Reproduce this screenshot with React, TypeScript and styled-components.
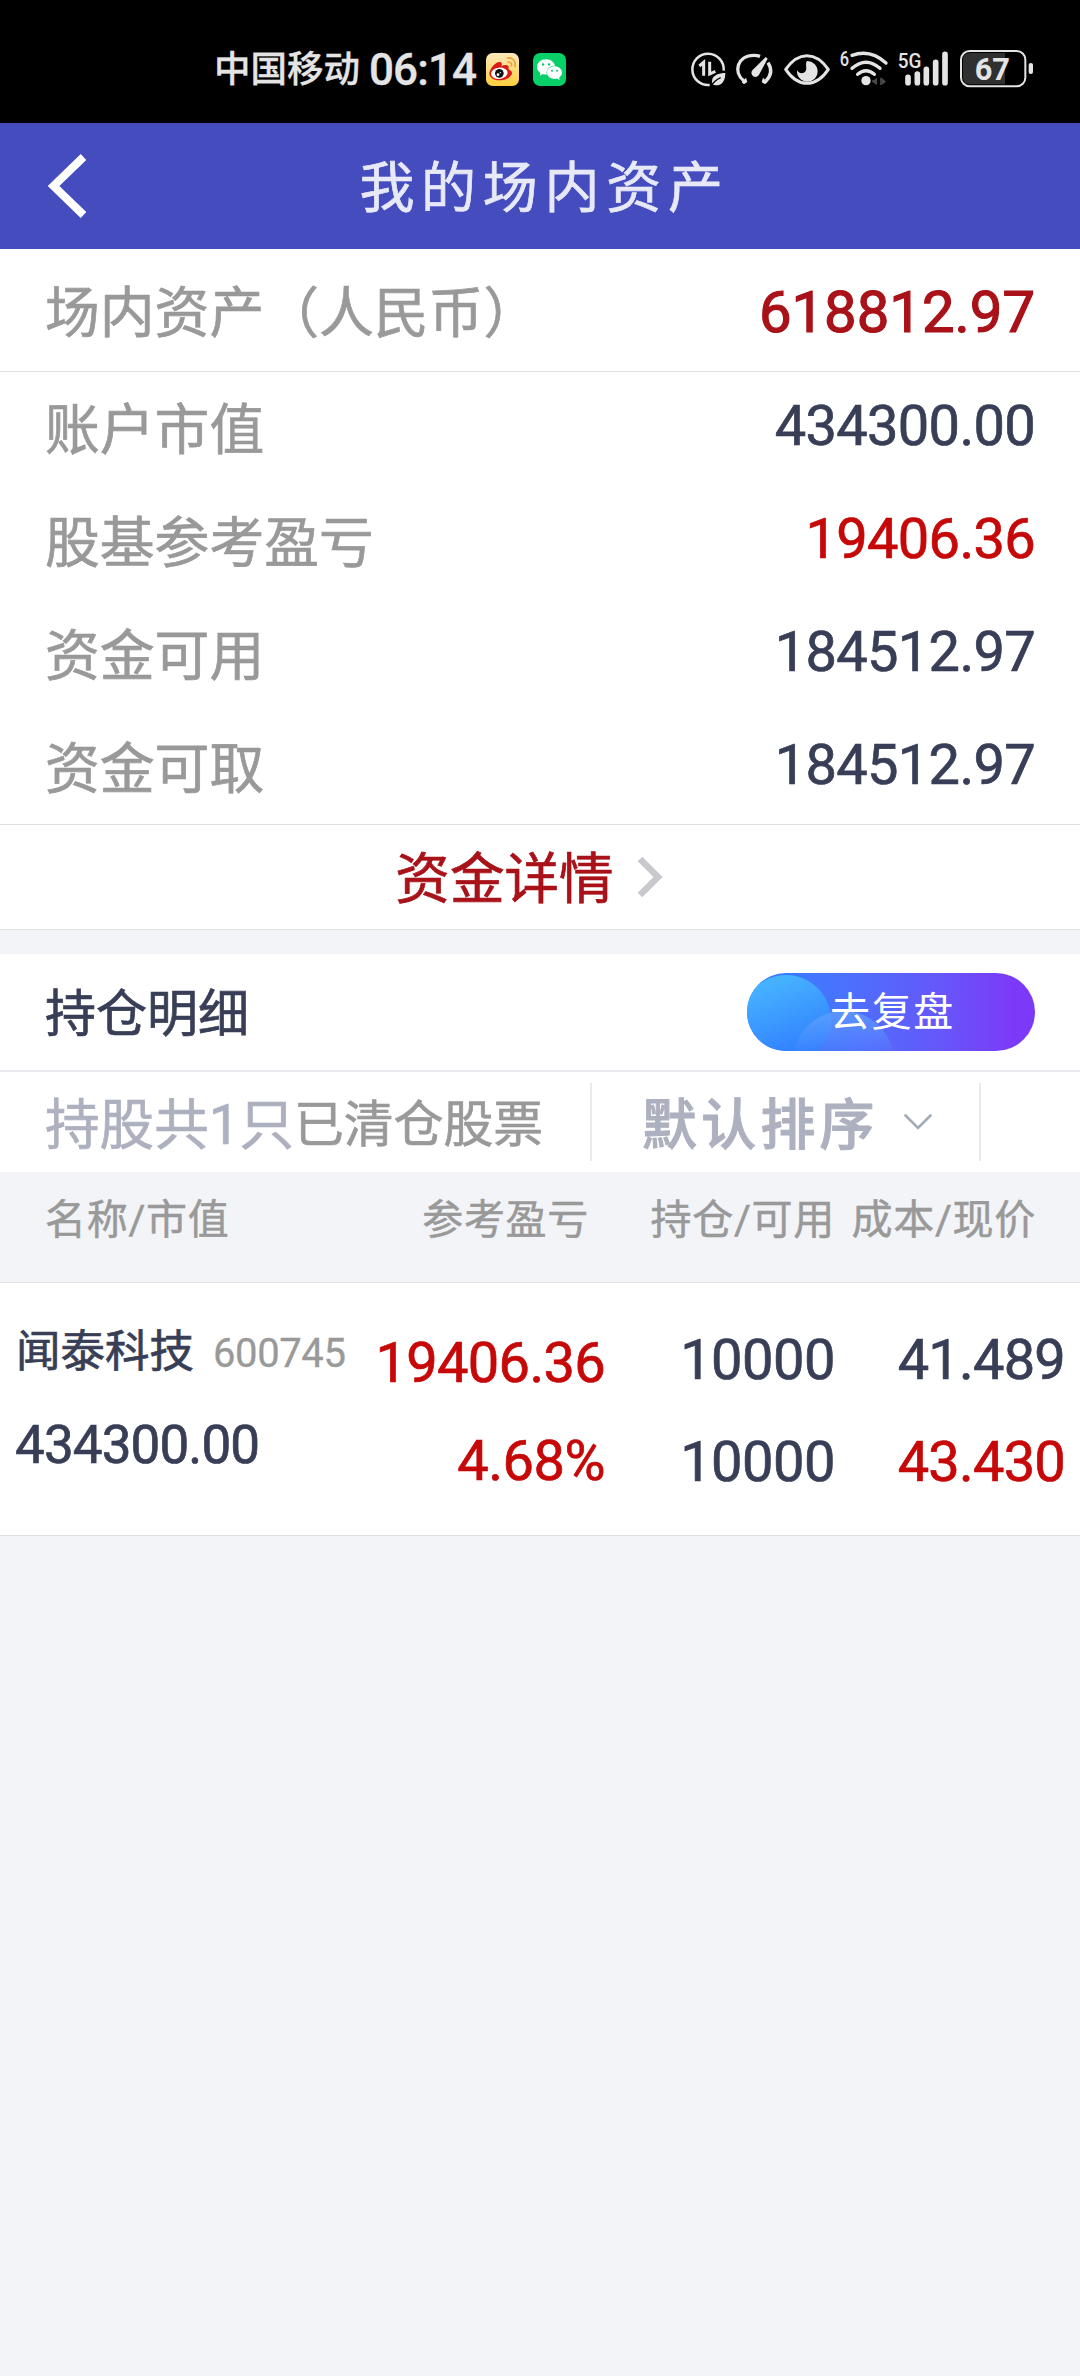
import React from "react";
import styled, { createGlobalStyle, css } from "styled-components";
import { SiWechat } from "react-icons/si";

const C = {
  ink: "#383e56",
  gray: "#999999",
  muted: "#adb0be",
  red: "#c60808",
  deepRed: "#a81218",
  page: "#f3f4f7",
  line: "#e0e0e0",
  softLine: "#e8eaf0",
  brand: "#444cbe",
  status: "#e4e4e4",
};

const GlobalStyle = createGlobalStyle`
  * { box-sizing: border-box; }
  body {
    margin: 0;
    background: ${C.page};
    font-family: Roboto, "Noto Sans CJK SC", sans-serif;
  }
`;

const Screen = styled.div`
  width: 1080px;
  min-height: 2376px;
  background: ${C.page};
  display: flex;
  flex-direction: column;
`;

interface TextProps {
  $size: number;
  $color?: string;
  $track?: number;
  $weight?: number;
  $drop?: number;
  $line?: number;
  $stroke?: number;
}

const Text = styled.span<TextProps>`
  display: block;
  white-space: nowrap;
  font-size: ${(p) => p.$size}px;
  line-height: ${(p) => p.$line ?? 60}px;
  color: ${(p) => p.$color ?? C.ink};
  letter-spacing: ${(p) => p.$track ?? 0}px;
  font-weight: ${(p) => p.$weight ?? 400};
  -webkit-text-stroke: ${(p) => p.$stroke ?? 0.7}px currentColor;
  ${(p) =>
    p.$drop !== undefined &&
    css`
      margin-top: ${p.$drop * 2}px;
    `}
`;

const StatusBar = styled.header`
  height: 123px;
  padding: 15px 43px 0 214px;
  background: #000;
  display: flex;
  align-items: center;
`;

const AppBadges = styled.div`
  display: flex;
  gap: 14px;
  margin-left: 9px;
`;

const StatusIcons = styled.div`
  display: flex;
  margin-left: auto;

  svg {
    overflow: visible;
  }
`;

const Clock = styled.div`
  margin-left: 9px;
  width: 108px;
`;

const NavBar = styled.nav`
  height: 126px;
  background: ${C.brand};
  display: grid;
  grid-template-columns: 147px 1fr 138px;
  align-items: center;
  justify-items: center;
`;

const BackButton = styled.button`
  justify-self: start;
  margin-left: 46px;
  padding: 0;
  border: 0;
  background: none;
  display: flex;
`;

const Row = styled.div<{ $height: number; $border?: boolean }>`
  height: ${(p) => p.$height}px;
  padding: 0 45px;
  background: #fff;
  display: flex;
  align-items: center;
  justify-content: space-between;
  border-bottom: ${(p) => (p.$border ? `1px solid ${C.line}` : "0")};
`;

const Summary = styled.section`
  background: #fff;
  border-bottom: 1px solid ${C.line};
`;

const DetailLink = styled.a`
  height: 105px;
  padding-right: 22px;
  background: #fff;
  border-bottom: 1px solid ${C.line};
  display: flex;
  align-items: center;
  justify-content: center;
  gap: 23px;
`;

const SectionHead = styled(Row)`
  margin-top: 24px;
  height: 118px;
  border-bottom: 2px solid ${C.softLine};
`;

const ReviewButton = styled.button`
  position: relative;
  overflow: hidden;
  width: 288px;
  height: 78px;
  padding: 0 0 0 3px;
  border: 0;
  border-radius: 39px;
  background: linear-gradient(90deg, #2f80ff 0%, #4a72fd 33%, #6657fa 67%, #7c3af8 92%);
  display: flex;
  align-items: center;
  justify-content: center;
  font-family: inherit;
`;

const Bubble = styled.i<{ $x: number; $y: number; $d: number; $fill: string }>`
  position: absolute;
  left: ${(p) => p.$x}px;
  top: ${(p) => p.$y}px;
  width: ${(p) => p.$d}px;
  height: ${(p) => p.$d}px;
  border-radius: 50%;
  background: ${(p) => p.$fill};
`;

const ButtonLabel = styled(Text)`
  position: relative;
`;

const FilterBar = styled.div`
  height: 100px;
  background: #fff;
  display: flex;
  align-items: center;
`;

const Counts = styled.div`
  width: 590px;
  padding-left: 45px;
  display: flex;
  align-items: center;
`;

const SortSelect = styled.div`
  width: 391px;
  height: 78px;
  padding-left: 50px;
  border: solid ${C.softLine};
  border-width: 0 2px;
  display: flex;
  align-items: center;
  gap: 25px;
`;

const ColumnHeads = styled.div`
  height: 111px;
  padding: 18px 0 0 45px;
  border-bottom: 1px solid ${C.line};
  display: grid;
  grid-template-columns: 300px 244px 246px 201px;
  justify-items: end;

  & > :first-child {
    justify-self: start;
  }
`;

const Holding = styled.article`
  height: 253px;
  padding-left: 15px;
  background: #fff;
  border-bottom: 1px solid ${C.line};
  display: grid;
  grid-template-columns: 345px 245px 230px 230px;
`;

const Cell = styled.div<{ $top: number; $gap: number; $start?: boolean }>`
  padding-top: ${(p) => p.$top}px;
  display: flex;
  flex-direction: column;
  gap: ${(p) => p.$gap}px;
  align-items: ${(p) => (p.$start ? "flex-start" : "flex-end")};
`;

const NameLine = styled.div`
  margin-left: 1px;
  display: flex;
  align-items: baseline;
  gap: 19px;
`;

const WeiboBadge = () => (
  <svg width="33" height="33" viewBox="0 0 99 99">
    <defs>
      <linearGradient id="weibo" x1="0" y1="0" x2="0" y2="1">
        <stop offset="0" stopColor="#fbe9bd" />
        <stop offset="1" stopColor="#fed03a" />
      </linearGradient>
    </defs>
    <rect width="99" height="99" rx="20" fill="url(#weibo)" />
    <path
      d="M10 60C12 45 31 24 43 27C49 29 48 36 46 39C57 34 68 34 68 43C67 47 67 49 69 50C78 53 80 60 76 66C68 79 50 82 38 82C22 81 9 73 10 60Z"
      fill="#da1a18"
    />
    <ellipse cx="40" cy="61" rx="25" ry="17" fill="#fff" transform="rotate(-7 40 61)" />
    <circle cx="40" cy="61" r="13" fill="#111" />
    <circle cx="36" cy="65" r="4" fill="#fff" />
    <circle cx="43" cy="59" r="2" fill="#fff" />
    <path d="M64 15C79 12 90 24 87 40" fill="none" stroke="#f0a03a" strokeWidth="5" strokeLinecap="round" />
    <path d="M66 27C74 26 78 32 76 38" fill="none" stroke="#f0a03a" strokeWidth="5" strokeLinecap="round" />
  </svg>
);

const WechatTile = styled.span`
  width: 33px;
  height: 33px;
  border-radius: 7px;
  background: #07d068;
  color: #fff;
  display: flex;
  align-items: center;
  justify-content: center;
`;

const DataSaverIcon = () => (
  <svg width="40" height="39" viewBox="60 60 120 117" fill="none" stroke={C.status}>
    <path d="M161 122A47 47 0 1 0 119 165" strokeWidth="7.5" />
    <path d="M88 108L101 97V137" strokeWidth="9" />
    <path d="M119 95V132L136 124" strokeWidth="9" />
    <path
      d="M166 129C148 129 126 136 126 153C126 158 127 161 130 164C148 171 166 160 166 129Z"
      fill={C.status}
      stroke="none"
    />
    <path d="M122 171C130 156 140 148 152 143" stroke="#000" strokeWidth="4" />
  </svg>
);

const GaugeIcon = () => (
  <svg width="50" height="39" viewBox="180 60 150 117" fill="none" stroke={C.status}>
    <path d="M222 153C188 127 202 76 252 76Q262 76 270 79" strokeWidth="10" />
    <path d="M294 98C308 120 302 140 286 155" strokeWidth="10" />
    <path d="M215 157L228 143L232 156L222 163ZM292 157L279 143L275 156L285 163Z" fill={C.status} stroke="none" />
    <path d="M287 81L293 86L267 134A12 12 0 1 1 247 121Z" fill={C.status} stroke="none" />
  </svg>
);

const EyeIcon = () => (
  <svg width="55" height="39" viewBox="330 60 165 117">
    <path
      d="M347 118C365 92 388 77 411 77C434 77 457 92 475 118C457 145 434 160 411 160C388 160 365 145 347 118Z"
      fill="none"
      stroke={C.status}
      strokeWidth="9"
      strokeLinejoin="round"
    />
    <path d="M411 93A31 31 0 1 1 381 121C388 134 404 132 408 121C411 112 405 100 411 93Z" fill={C.status} />
  </svg>
);

const WifiIcon = () => (
  <svg width="60" height="39" viewBox="495 60 180 117" fill="none" stroke={C.status} strokeWidth="10">
    <text x="509" y="109" fontSize="61" fontWeight="500" fill={C.status} stroke="none" textLength="28" lengthAdjust="spacingAndGlyphs">
      6
    </text>
    <path d="M546 76Q601 56 648 99" strokeLinecap="round" />
    <path d="M546 115Q588 78 630 115" strokeLinecap="round" />
    <path d="M563 133Q588 112 613 133" strokeLinecap="round" />
    <circle cx="588" cy="152" r="14" fill={C.status} stroke="none" />
    <path d="M606 155L621 143V165M635 165V143L648 155Z" fill="#4a4a4a" stroke="none" />
    <path d="M606 153H621M633 143V165" stroke="#4a4a4a" strokeWidth="5" />
  </svg>
);

const SignalIcon = () => (
  <svg width="60" height="39" viewBox="675 60 180 117" stroke={C.status} strokeWidth="17" strokeLinecap="round">
    <path d="M714 142V158M742 132V158M769 118V158M797 97V158M825 73V158" />
    <text x="683" y="114" fontSize="62" fontWeight="500" fill={C.status} stroke="#000" strokeWidth="10" paintOrder="stroke" textLength="71" lengthAdjust="spacingAndGlyphs">
      5G
    </text>
  </svg>
);

const BatteryIcon = () => (
  <svg width="82" height="39" viewBox="855 60 246 117">
    <path d="M900 69H1005V163H900Q879 163 879 142V90Q879 69 900 69Z" fill="#303030" />
    <rect x="873" y="63" width="193" height="106" rx="26" fill="none" stroke={C.status} strokeWidth="6" />
    <rect x="1076" y="99" width="13" height="33" rx="6" fill={C.status} />
    <text x="967" y="150" fontSize="96" fontWeight="700" fill={C.status} textAnchor="middle" textLength="106" lengthAdjust="spacingAndGlyphs">
      67
    </text>
  </svg>
);

const balances = [
  { label: "账户市值", value: "434300.00" },
  { label: "股基参考盈亏", value: "19406.36", color: C.red },
  { label: "资金可用", value: "184512.97" },
  { label: "资金可取", value: "184512.97" },
];

const columns = ["名称/市值", "参考盈亏", "持仓/可用", "成本/现价"];

export default function App() {
  return (
    <Screen>
      <GlobalStyle />
      <StatusBar>
        <Text $size={36.5} $color={C.status} $weight={500} $drop={1} $stroke={0.3}>
          中国移动
        </Text>
        <Clock>
          <Text $size={44} $color={C.status} $weight={500} $track={-0.9} $drop={0.5} $stroke={0.3}>
            06:14
          </Text>
        </Clock>
        <AppBadges>
          <WeiboBadge />
          <WechatTile>
            <SiWechat size={25} />
          </WechatTile>
        </AppBadges>
        <StatusIcons>
          <DataSaverIcon />
          <GaugeIcon />
          <EyeIcon />
          <WifiIcon />
          <SignalIcon />
          <BatteryIcon />
        </StatusIcons>
      </StatusBar>

      <NavBar>
        <BackButton aria-label="返回">
          <svg width="44" height="66" viewBox="0 0 44 66">
            <path d="M37.5 4L7.5 33L37.5 62" fill="none" stroke="#fff" strokeWidth="8" />
          </svg>
        </BackButton>
        <Text $size={55} $color="#e8e9f7" $track={6.7} $drop={1.5}>
          我的场内资产
        </Text>
      </NavBar>

      <Row $height={123} $border>
        <Text $size={54.8} $color={C.gray} $drop={3}>
          场内资产（人民币）
        </Text>
        <Text $size={58} $color={C.deepRed} $stroke={1.2} $drop={1.5}>
          618812.97
        </Text>
      </Row>

      <Summary>
        {balances.map((b) => (
          <Row key={b.label} $height={113}>
            <Text $size={54.8} $color={C.gray} $drop={1.7}>
              {b.label}
            </Text>
            <Text $size={56} $color={b.color} $drop={-2.7} $track={-0.7}>
              {b.value}
            </Text>
          </Row>
        ))}
      </Summary>

      <DetailLink>
        <Text $size={54.6} $color={C.deepRed} $drop={2}>
          资金详情
        </Text>
        <svg width="26" height="42" viewBox="0 0 26 42">
          <path d="M3 3L21 21L3 39" fill="none" stroke="#c8c8cd" strokeWidth="6.5" />
        </svg>
      </DetailLink>

      <SectionHead $height={118}>
        <Text $size={51} $drop={2.5}>
          持仓明细
        </Text>
        <ReviewButton>
          <Bubble $x={-6} $y={2} $d={90} $fill="linear-gradient(160deg, #46b2ff 15%, #2f7cff 85%)" />
          <Bubble
            $x={46}
            $y={38}
            $d={101}
            $fill="linear-gradient(180deg, rgba(96,160,255,.75) 0%, rgba(80,120,255,.1) 45%)"
          />
          <ButtonLabel $size={40} $color="#fff" $track={1.7} $drop={1.3} $stroke={0}>
            去复盘
          </ButtonLabel>
        </ReviewButton>
      </SectionHead>

      <FilterBar>
        <Counts>
          <Text $size={54.6} $color={C.muted} $drop={2.5}>
            持股共1只
          </Text>
          <Text $size={49.8} $color={C.gray} $drop={2.5}>
            已清仓股票
          </Text>
        </Counts>
        <SortSelect>
          <Text $size={54.8} $color={C.muted} $weight={500} $stroke={1} $track={4.4} $drop={2.5}>
            默认排序
          </Text>
          <svg width="28" height="16" viewBox="0 0 28 16">
            <path d="M1.5 1.5L14 14L26.5 1.5" fill="none" stroke="#a2abb9" strokeWidth="2.6" strokeLinecap="round" />
          </svg>
        </SortSelect>
      </FilterBar>

      <ColumnHeads>
        {columns.map((c) => (
          <Text key={c} $size={41} $color={C.gray} $track={0.7} $stroke={0.5}>
            {c}
          </Text>
        ))}
      </ColumnHeads>

      <Holding>
        <Cell $top={39} $gap={31} $start>
          <NameLine>
            <Text $size={44.5}>闻泰科技</Text>
            <Text $size={40} $color={C.gray} $track={-0.4} $stroke={0.3}>
              600745
            </Text>
          </NameLine>
          <Text $size={53} $track={-0.9}>
            434300.00
          </Text>
        </Cell>
        <Cell $top={50} $gap={37.5}>
          <Text $size={56} $color={C.red} $track={-0.7}>
            19406.36
          </Text>
          <Text $size={56} $color={C.red} $track={-0.5}>
            4.68%
          </Text>
        </Cell>
        <Cell $top={47} $gap={42}>
          <Text $size={56} $track={-0.5}>10000</Text>
          <Text $size={56} $track={-0.5}>10000</Text>
        </Cell>
        <Cell $top={47} $gap={42}>
          <Text $size={56} $track={-0.8}>41.489</Text>
          <Text $size={56} $color={C.red} $track={-0.8}>
            43.430
          </Text>
        </Cell>
      </Holding>
    </Screen>
  );
}
